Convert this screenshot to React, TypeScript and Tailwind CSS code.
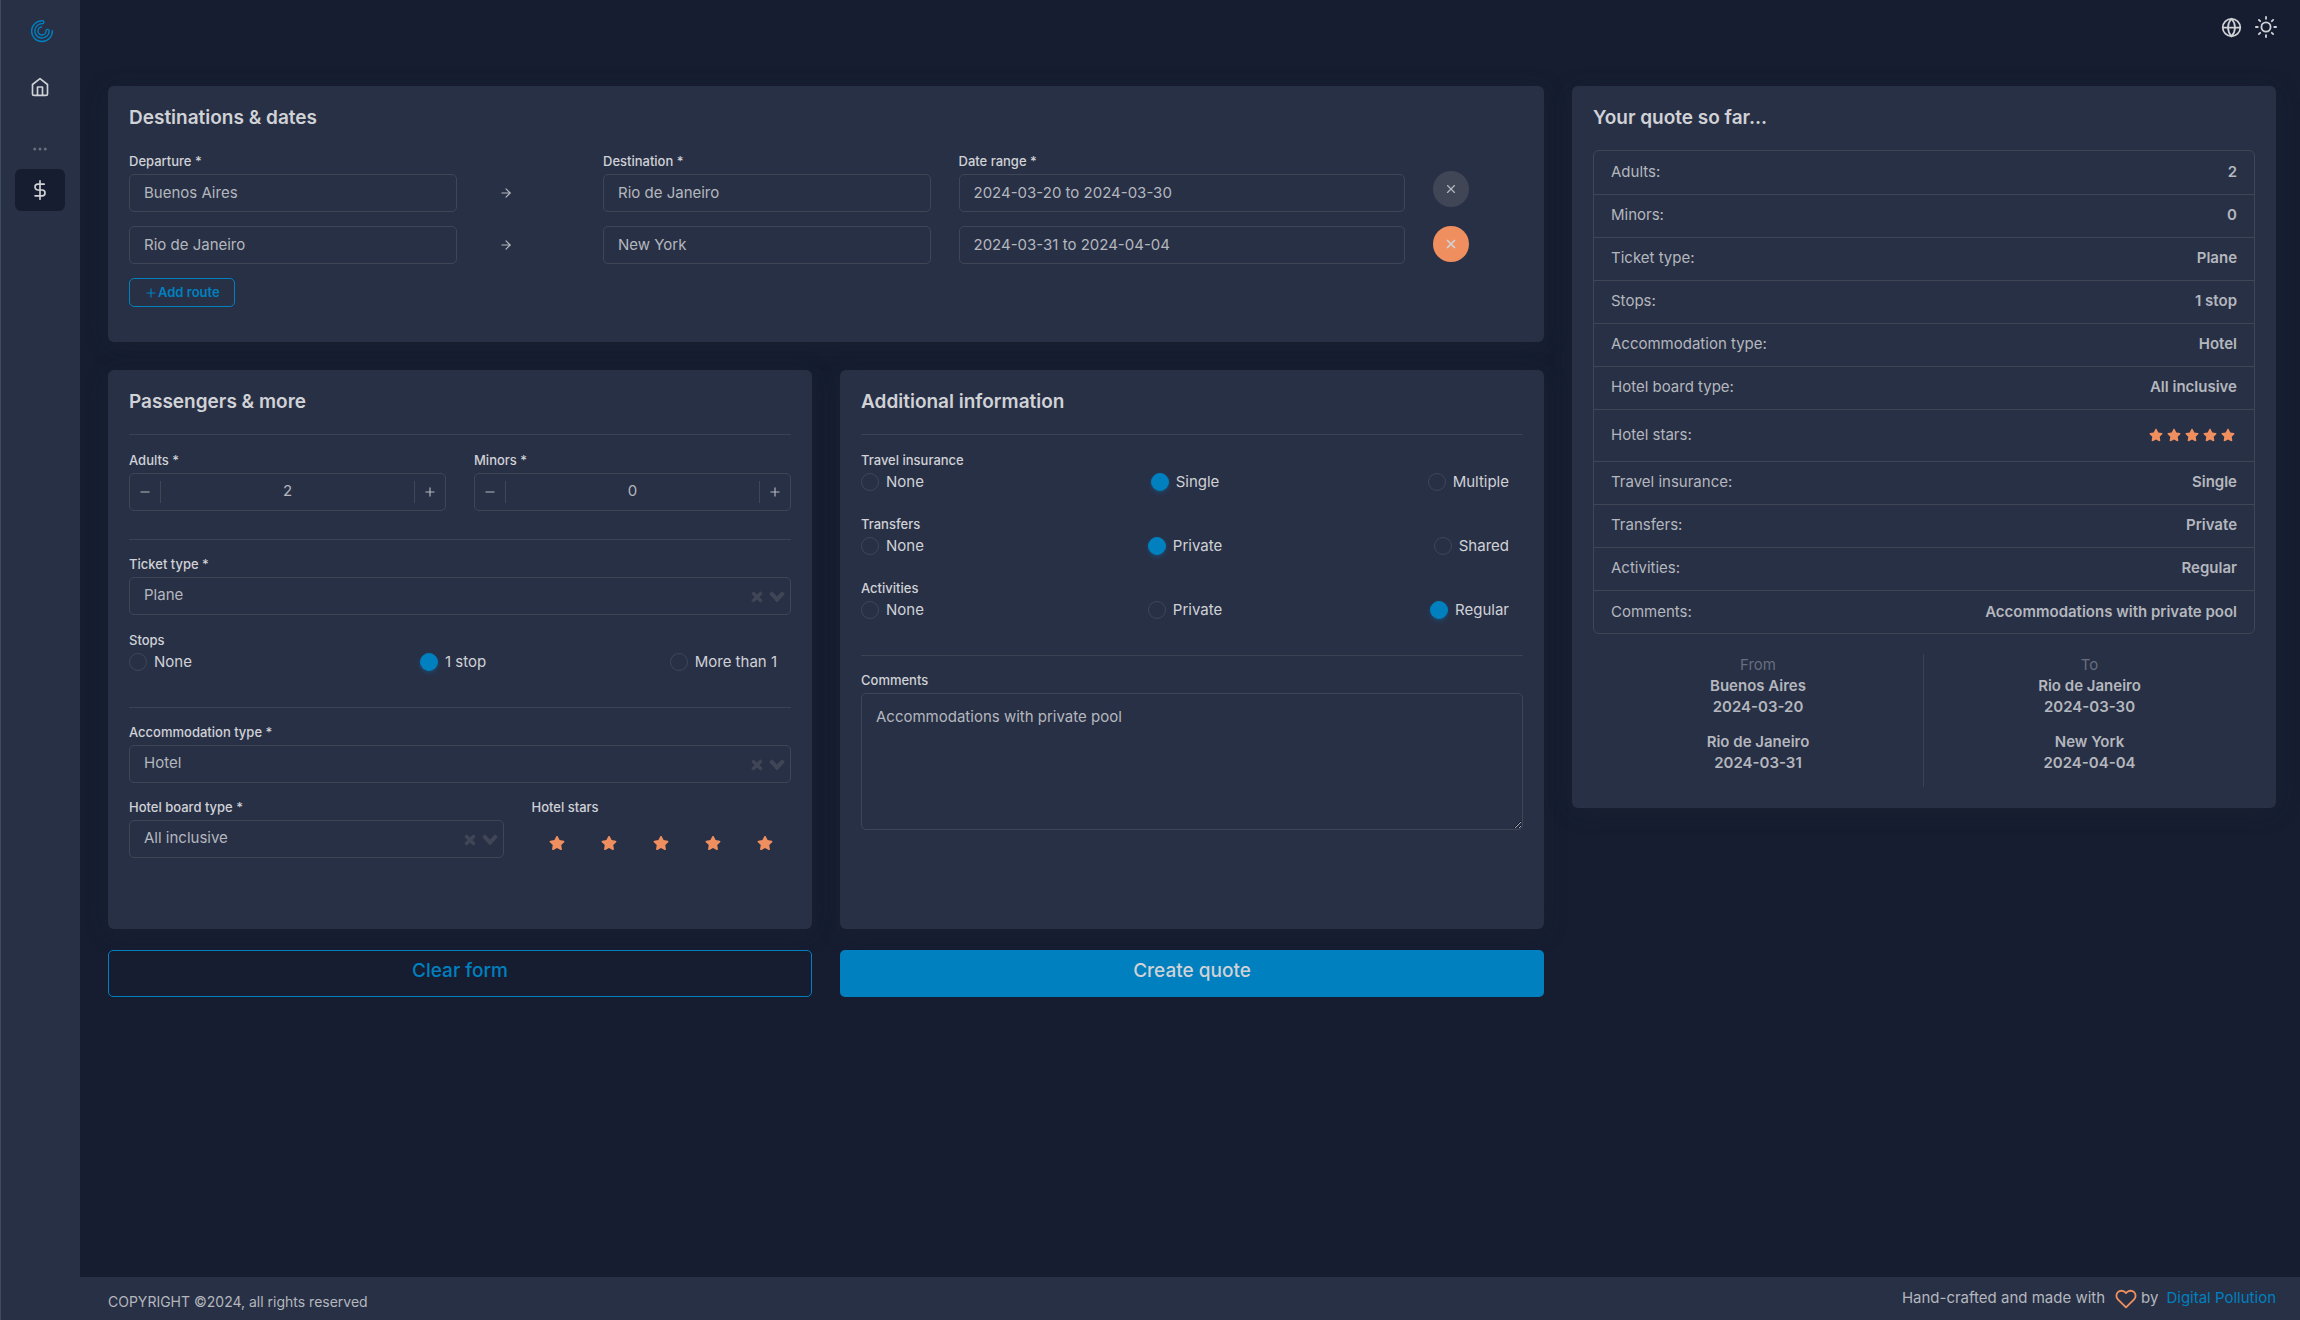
import React from 'react';
import {
  FiArrowRight,
  FiDollarSign,
  FiGlobe,
  FiHeart,
  FiHome,
  FiMinus,
  FiMoreHorizontal,
  FiPlus,
  FiSun,
  FiX,
} from 'react-icons/fi';
import { FaStar } from 'react-icons/fa';

const routes = [
  { from: 'Buenos Aires', to: 'Rio de Janeiro', start: '2024-03-20', end: '2024-03-30' },
  { from: 'Rio de Janeiro', to: 'New York', start: '2024-03-31', end: '2024-04-04' },
];

const STARS = [1, 2, 3, 4, 5];

const summary = [
  { label: 'Adults:', value: '2' },
  { label: 'Minors:', value: '0' },
  { label: 'Ticket type:', value: 'Plane' },
  { label: 'Stops:', value: '1 stop' },
  { label: 'Accommodation type:', value: 'Hotel' },
  { label: 'Hotel board type:', value: 'All inclusive' },
  { label: 'Hotel stars:', value: 'stars' },
  { label: 'Travel insurance:', value: 'Single' },
  { label: 'Transfers:', value: 'Private' },
  { label: 'Activities:', value: 'Regular' },
  { label: 'Comments:', value: 'Accommodations with private pool' },
];

const inputClass =
  'block h-[38px] w-full rounded-[5px] border border-[#404656] bg-transparent px-3.5 pb-0.5 text-[15px] text-[#b4b7bd] outline-none focus:border-[#0080bf]';

function Logo() {
  return (
    <svg className="size-6" viewBox="0 0 24 24" fill="none" stroke="#0080bf" strokeWidth="1.4" strokeLinecap="round">
      <path d="M22.4 11.6A10.4 10.4 0 1 1 12.6 1.7c1.7.1 1.8 2.9 0 3A7.2 7.2 0 1 0 19.2 12c0-2.2-3.2-2.2-3.2 0A4 4 0 1 1 11.6 8" />
    </svg>
  );
}

function Card({ title, className = '', children }: { title: string; className?: string; children: React.ReactNode }) {
  return (
    <section className={`rounded-md bg-[#283046] px-[21px] pt-[18px] shadow-[0_4px_24px_rgba(34,41,47,0.24)] ${className}`}>
      <h2 className="text-[19px] leading-7 font-semibold text-[#d0d2d6]">{title}</h2>
      {children}
    </section>
  );
}

function Label({ htmlFor, children }: { htmlFor?: string; children: React.ReactNode }) {
  return (
    <label htmlFor={htmlFor} className="mb-1 block text-[13px] leading-[18px] font-medium text-[#d0d2d6]">
      {children}
    </label>
  );
}

function Divider({ className = '' }: { className?: string }) {
  return <hr className={`border-[#3b4253] ${className}`} />;
}

function Stepper({ id, label, value }: { id: string; label: string; value: number }) {
  return (
    <div>
      <Label htmlFor={id}>{label}</Label>
      <div className="flex h-[38px] items-center rounded-[5px] border border-[#404656] text-[#b4b7bd]">
        <button type="button" aria-label={`Fewer ${id}`} className="flex h-[22px] w-[31px] items-center justify-center border-r border-[#404656]">
          <FiMinus className="size-3.5" />
        </button>
        <input id={id} defaultValue={value} inputMode="numeric" className="min-w-0 flex-1 bg-transparent pb-0.5 text-center text-[15px] outline-none" />
        <button type="button" aria-label={`More ${id}`} className="flex h-[22px] w-[31px] items-center justify-center border-l border-[#404656]">
          <FiPlus className="size-3.5" />
        </button>
      </div>
    </div>
  );
}

function Select({ id, label, options }: { id: string; label: string; options: string[] }) {
  return (
    <div>
      <Label htmlFor={id}>{label}</Label>
      <div className="relative">
        <select id={id} className={`${inputClass} appearance-none`}>
          {options.map((option) => (
            <option key={option}>{option}</option>
          ))}
        </select>
        <div className="pointer-events-none absolute inset-y-0 right-[7px] flex items-center gap-2 pt-0.5 text-[#404656]">
          <svg width="10" height="10" viewBox="0 0 10 10" fill="currentColor" stroke="currentColor" className="overflow-visible">
            <path d="M6.895455 5l2.842897-2.842898c.348864-.348863.348864-.914488 0-1.263636L9.106534.261648c-.348864-.348864-.914489-.348864-1.263636 0L5 3.104545 2.157102.261648c-.348863-.348864-.914488-.348864-1.263636 0L.261648.893466c-.348864.348864-.348864.914489 0 1.263636L3.104545 5 .261648 7.842898c-.348864.348863-.348864.914488 0 1.263636l.631818.631818c.348864.348864.914773.348864 1.263636 0L5 6.895455l2.842898 2.842897c.348863.348864.914772.348864 1.263636 0l.631818-.631818c.348864-.348864.348864-.914489 0-1.263636L6.895455 5z" />
          </svg>
          <svg width="14" height="10" viewBox="0 0 14 10" fill="currentColor" stroke="currentColor" className="overflow-visible">
            <path d="M9.211364 7.59931l4.48338-4.867229c.407008-.441854.407008-1.158247 0-1.60046l-.73712-.80023c-.407008-.441854-1.066904-.441854-1.474243 0L7 5.198617 2.51662.33139c-.407008-.441853-1.066904-.441853-1.474243 0l-.737121.80023c-.407008.441854-.407008 1.158248 0 1.600461l4.48338 4.867228L7 10l2.211364-2.40069z" />
          </svg>
        </div>
      </div>
    </div>
  );
}

function RadioGroup({ name, label, options, selected }: { name: string; label: string; options: string[]; selected: string }) {
  return (
    <fieldset>
      <legend className="text-[13px] leading-[18px] font-medium text-[#d0d2d6]">{label}</legend>
      <div className="grid h-[26px] grid-cols-3 items-center justify-items-center">
        {options.map((option) => (
          <label
            key={option}
            className="mr-3.5 flex items-center gap-[7px] text-[15px] leading-5 text-[#d0d2d6] first:justify-self-start last:justify-self-end"
          >
            <input
              type="radio"
              name={name}
              defaultChecked={option === selected}
              className="size-[18px] appearance-none rounded-full border border-[#404656] checked:border-[#0080bf] checked:bg-[#0080bf] checked:shadow-[0_2px_4px_rgba(0,128,191,0.3)]"
            />
            {option}
          </label>
        ))}
      </div>
    </fieldset>
  );
}

function Sidebar() {
  return (
    <aside className="flex w-20 shrink-0 flex-col items-center bg-[#283046] text-[#d0d2d6] shadow-[inset_1px_0_0_#404a61]">
      <a href="#" aria-label="Logo" className="mt-[19px] ml-1">
        <Logo />
      </a>
      <nav className="mt-[23px] flex flex-col items-center">
        <a href="#home" aria-label="Home" className="flex h-[42px] w-[50px] items-center justify-center">
          <FiHome className="size-5" />
        </a>
        <FiMoreHorizontal className="mt-8 mb-[11px] size-[18px] text-[#676d7d]" />
        <a href="#quotes" aria-label="Quotes" className="flex h-[42px] w-[50px] items-center justify-center rounded-md bg-[#161d31]">
          <FiDollarSign className="size-5" />
        </a>
      </nav>
    </aside>
  );
}

function Destinations() {
  return (
    <Card title="Destinations & dates" className="col-span-2 pb-[35px]">
      <div className="mt-5 space-y-3.5">
        {routes.map((route, i) => (
          <div key={route.from} className="grid grid-cols-12 items-end gap-x-7">
            <div className="col-span-3">
              {i === 0 && <Label htmlFor="from-0">Departure *</Label>}
              <input id={`from-${i}`} aria-label="Departure" defaultValue={route.from} className={inputClass} />
            </div>
            <div className="flex h-[38px] items-center pl-3.5">
              <FiArrowRight className="size-3.5 text-[#b4b7bd]" />
            </div>
            <div className="col-span-3">
              {i === 0 && <Label htmlFor="to-0">Destination *</Label>}
              <input id={`to-${i}`} aria-label="Destination" defaultValue={route.to} className={inputClass} />
            </div>
            <div className="col-span-4">
              {i === 0 && <Label htmlFor="dates-0">Date range *</Label>}
              <input id={`dates-${i}`} aria-label="Date range" defaultValue={`${route.start} to ${route.end}`} className={inputClass} />
            </div>
            <button
              type="button"
              aria-label="Remove route"
              disabled={i === 0}
              className="mb-0.5 flex size-9 items-center justify-center rounded-full bg-[#ef8f5f] text-[#d0d2d6] disabled:mb-[5px] disabled:bg-[#404656] disabled:text-[#b4b7bd]"
            >
              <FiX className="size-3.5" strokeWidth={i === 0 ? 2 : 3} />
            </button>
          </div>
        ))}
      </div>
      <button type="button" className="mt-3.5 flex h-[29px] items-center rounded-[5px] border border-[#0080bf] px-3.5 text-[13px] font-semibold text-[#0080bf]">
        <FiPlus className="size-3.5" />
        Add route
      </button>
    </Card>
  );
}

function Passengers() {
  return (
    <Card title="Passengers & more" className="pb-[71px]">
      <Divider className="mt-[18px] mb-4" />
      <div className="grid grid-cols-2 gap-7">
        <Stepper id="adults" label="Adults *" value={2} />
        <Stepper id="minors" label="Minors *" value={0} />
      </div>
      <Divider className="mt-7 mb-[15px]" />
      <Select id="ticket" label="Ticket type *" options={['Plane', 'Bus', 'Train']} />
      <div className="mt-4">
        <RadioGroup name="stops" label="Stops" options={['None', '1 stop', 'More than 1']} selected="1 stop" />
      </div>
      <Divider className="mt-8 mb-[15px]" />
      <Select id="accommodation" label="Accommodation type *" options={['Hotel', 'Apartment', 'Hostel']} />
      <div className="mt-[15px] grid grid-cols-12 gap-7">
        <div className="col-span-7">
          <Select id="board" label="Hotel board type *" options={['All inclusive', 'Half board', 'Breakfast']} />
        </div>
        <div className="col-span-5">
          <Label>Hotel stars</Label>
          <div className="flex h-[38px] items-center justify-around pt-2">
            {STARS.map((n) => (
              <button key={n} type="button" aria-label={`${n} stars`}>
                <FaStar className="size-4 text-[#ef8f5f]" />
              </button>
            ))}
          </div>
        </div>
      </div>
    </Card>
  );
}

function AdditionalInfo() {
  return (
    <Card title="Additional information">
      <Divider className="mt-[18px] mb-4" />
      <div className="space-y-5">
        <RadioGroup name="insurance" label="Travel insurance" options={['None', 'Single', 'Multiple']} selected="Single" />
        <RadioGroup name="transfers" label="Transfers" options={['None', 'Private', 'Shared']} selected="Private" />
        <RadioGroup name="activities" label="Activities" options={['None', 'Private', 'Regular']} selected="Regular" />
      </div>
      <Divider className="mt-8 mb-[15px]" />
      <Label htmlFor="comments">Comments</Label>
      <textarea
        id="comments"
        defaultValue="Accommodations with private pool"
        className="block h-[137px] w-full resize-y rounded-[5px] border border-[#404656] bg-transparent px-3.5 py-3 text-[15px] leading-[22px] text-[#b4b7bd] outline-none"
      />
    </Card>
  );
}

function QuoteSummary() {
  return (
    <Card title="Your quote so far..." className="pb-[21px] text-[15px] text-[#b4b7bd]">
      <div className="mt-[18px] rounded-md border border-[#404656]">
        <table className="w-full">
          <tbody className="divide-y divide-[#404656]">
            {summary.map((row) => (
              <tr key={row.label} className={row.value === 'stars' ? 'h-[52px]' : 'h-[43px]'}>
                <th scope="row" className="pl-[17px] text-left font-normal">{row.label}</th>
                <td className="pr-[17px] text-right font-semibold">
                  {row.value === 'stars' ? (
                    <div className="flex justify-end gap-1 pr-0.5">
                      {STARS.map((n) => (
                        <FaStar key={n} className="size-3.5 text-[#ef8f5f]" />
                      ))}
                    </div>
                  ) : (
                    row.value
                  )}
                </td>
              </tr>
            ))}
          </tbody>
        </table>
      </div>
      <div className="mt-5 grid grid-cols-2 divide-x divide-[#3b4253] text-center leading-[21px]">
        <div>
          <p className="text-[#676d7d]">From</p>
          {routes.map((route) => (
            <div key={route.start} className="mb-3.5 font-semibold">
              <p>{route.from}</p>
              <p>{route.start}</p>
            </div>
          ))}
        </div>
        <div>
          <p className="text-[#676d7d]">To</p>
          {routes.map((route) => (
            <div key={route.end} className="mb-3.5 font-semibold">
              <p>{route.to}</p>
              <p>{route.end}</p>
            </div>
          ))}
        </div>
      </div>
    </Card>
  );
}

export default function App() {
  return (
    <div className="flex min-h-screen bg-[#161d31] font-['Inter',sans-serif] text-[15px] text-[#b4b7bd]">
      <Sidebar />
      <div className="flex min-w-0 flex-1 flex-col">
        <header className="flex h-[86px] justify-end gap-[13px] pt-4 pr-[23px] text-[#d0d2d6]">
          <button type="button" aria-label="Language" className="flex size-[22px] items-center justify-center">
            <FiGlobe className="size-[21px]" />
          </button>
          <button type="button" aria-label="Toggle theme" className="flex size-[22px] items-center justify-center">
            <FiSun className="size-[22px]" />
          </button>
        </header>

        <main className="grid flex-1 grid-cols-3 items-start gap-7 pr-6 pb-7 pl-7">
          <form className="col-span-2 grid grid-cols-2 gap-x-7">
            <Destinations />
            <div className="col-span-2 mt-7 grid grid-cols-2 gap-7">
              <Passengers />
              <AdditionalInfo />
            </div>
            <button type="reset" className="mt-[21px] h-[47px] rounded-[5px] border border-[#0080bf] pb-1 text-[19px] font-medium text-[#0080bf]">
              Clear form
            </button>
            <button type="button" className="mt-[21px] h-[47px] rounded-[5px] bg-[#0080bf] pb-1 text-[19px] font-medium text-[#d0d2d6]">
              Create quote
            </button>
          </form>
          <QuoteSummary />
        </main>

        <footer className="flex h-[43px] justify-between bg-[#283046] pr-6 pl-7">
          <p className="pt-3.5 text-sm leading-[22px]">COPYRIGHT ©2024, all rights reserved</p>
          <p className="flex items-center">
            Hand-crafted and made with
            <FiHeart className="mr-1 ml-2.5 size-[22px] text-[#ef8f5f]" />
            by
            <a href="#digital-pollution" className="ml-2 text-[#0080bf]">Digital Pollution</a>
          </p>
        </footer>
      </div>
    </div>
  );
}
